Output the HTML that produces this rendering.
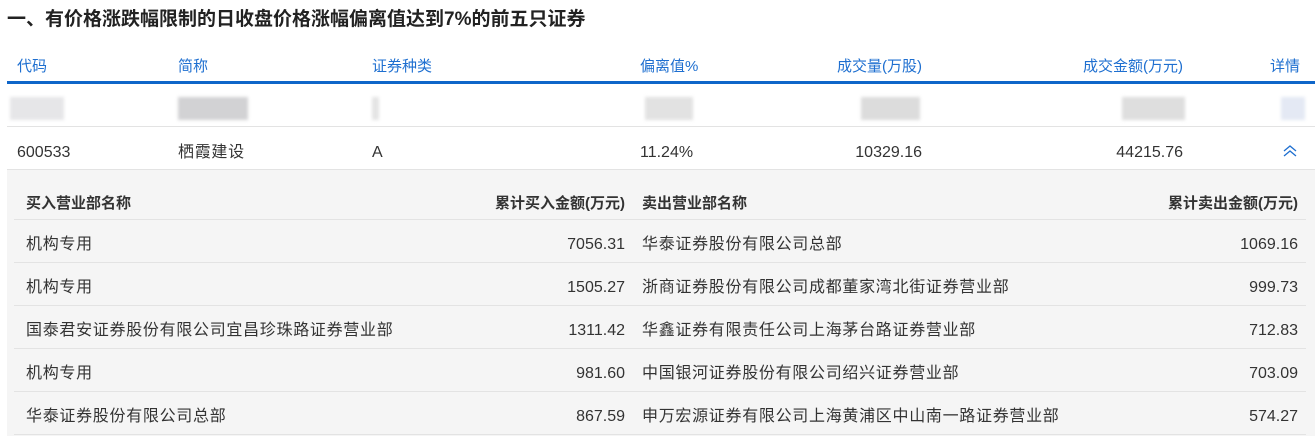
<!DOCTYPE html>
<html><head><meta charset="utf-8"><style>
*{margin:0;padding:0;box-sizing:border-box}
body{width:1315px;height:436px;overflow:hidden;background:#fff;font-family:"Liberation Sans","Noto Sans CJK SC",sans-serif;font-size:16px;color:#333;position:relative}
.a{position:absolute;white-space:nowrap;line-height:18px;margin-top:2px}
.c{letter-spacing:0.7px}
.r{text-align:right}
h1{position:absolute;left:7px;top:8px;font-size:19px;font-weight:bold;color:#222;line-height:24px}
.hd{color:#1e6fd0;top:56px;font-size:15px}
.blue{position:absolute;left:7px;top:81px;width:1308px;height:3px;background:#0f66c9}
.line{position:absolute;height:1px;background:#e3e3e3}
.b{position:absolute;background:#ddd;filter:blur(1.5px)}
.gray{position:absolute;left:7px;top:170px;width:1308px;height:266px;background:#f5f5f5}
.sub{font-weight:bold;font-size:15px;color:#333}
</style></head><body>
<h1>一、有价格涨跌幅限制的日收盘价格涨幅偏离值达到7%的前五只证券</h1>
<div class="a hd" style="left:17px">代码</div>
<div class="a hd" style="left:178px">简称</div>
<div class="a hd" style="left:372px">证券种类</div>
<div class="a hd" style="left:640px">偏离值%</div>
<div class="a hd r" style="right:393px">成交量(万股)</div>
<div class="a hd r" style="right:132px">成交金额(万元)</div>
<div class="a hd r" style="right:15px">详情</div>
<div class="blue"></div>
<div class="b" style="left:10px;top:97px;width:54px;height:23px;background:#e6e6e8"></div>
<div class="b" style="left:178px;top:97px;width:70px;height:23px;background:#d2d2d4"></div>
<div class="b" style="left:372px;top:97px;width:7px;height:23px;background:#e4e4e4"></div>
<div class="b" style="left:645px;top:97px;width:48px;height:23px;background:#e2e2e2"></div>
<div class="b" style="left:861px;top:97px;width:59px;height:23px;background:#dcdcdc"></div>
<div class="b" style="left:1122px;top:97px;width:63px;height:23px;background:#dedede"></div>
<div class="b" style="left:1281px;top:97px;width:24px;height:23px;background:#e4e9f4"></div>
<div class="line" style="left:7px;top:126px;width:1308px"></div>
<div class="a" style="left:17px;top:142px">600533</div>
<div class="a c" style="left:178px;top:142px">栖霞建设</div>
<div class="a" style="left:372px;top:142px">A</div>
<div class="a" style="left:640px;top:142px">11.24%</div>
<div class="a r" style="right:393px;top:142px">10329.16</div>
<div class="a r" style="right:132px;top:142px">44215.76</div>
<svg class="a" style="left:1282px;top:142px" width="16" height="14" viewBox="0 0 16 14"><path d="M2 7l6-5 6 5M2 12l6-5 6 5" fill="none" stroke="#1e6fd0" stroke-width="1.3"/></svg>
<div class="line" style="left:7px;top:169px;width:1308px"></div>
<div class="gray"></div>
<div class="a sub" style="left:26px;top:193px">买入营业部名称</div>
<div class="a sub r" style="right:690px;top:193px">累计买入金额(万元)</div>
<div class="a sub" style="left:642px;top:193px">卖出营业部名称</div>
<div class="a sub r" style="right:17px;top:193px">累计卖出金额(万元)</div>
<div class="line" style="left:14px;top:219px;width:1292px"></div>
<div class="a c" style="left:26px;top:234px">机构专用</div><div class="a r" style="right:690px;top:234px">7056.31</div><div class="a c" style="left:642px;top:234px">华泰证券股份有限公司总部</div><div class="a r" style="right:17px;top:234px">1069.16</div>
<div class="line" style="left:14px;top:262px;width:1292px"></div>
<div class="a c" style="left:26px;top:277px">机构专用</div><div class="a r" style="right:690px;top:277px">1505.27</div><div class="a c" style="left:642px;top:277px">浙商证券股份有限公司成都董家湾北街证券营业部</div><div class="a r" style="right:17px;top:277px">999.73</div>
<div class="line" style="left:14px;top:305px;width:1292px"></div>
<div class="a c" style="left:26px;top:320px">国泰君安证券股份有限公司宜昌珍珠路证券营业部</div><div class="a r" style="right:690px;top:320px">1311.42</div><div class="a c" style="left:642px;top:320px">华鑫证券有限责任公司上海茅台路证券营业部</div><div class="a r" style="right:17px;top:320px">712.83</div>
<div class="line" style="left:14px;top:348px;width:1292px"></div>
<div class="a c" style="left:26px;top:363px">机构专用</div><div class="a r" style="right:690px;top:363px">981.60</div><div class="a c" style="left:642px;top:363px">中国银河证券股份有限公司绍兴证券营业部</div><div class="a r" style="right:17px;top:363px">703.09</div>
<div class="line" style="left:14px;top:391px;width:1292px"></div>
<div class="a c" style="left:26px;top:406px">华泰证券股份有限公司总部</div><div class="a r" style="right:690px;top:406px">867.59</div><div class="a c" style="left:642px;top:406px">申万宏源证券有限公司上海黄浦区中山南一路证券营业部</div><div class="a r" style="right:17px;top:406px">574.27</div>
<div class="line" style="left:14px;top:434px;width:1292px"></div>
</body></html>
